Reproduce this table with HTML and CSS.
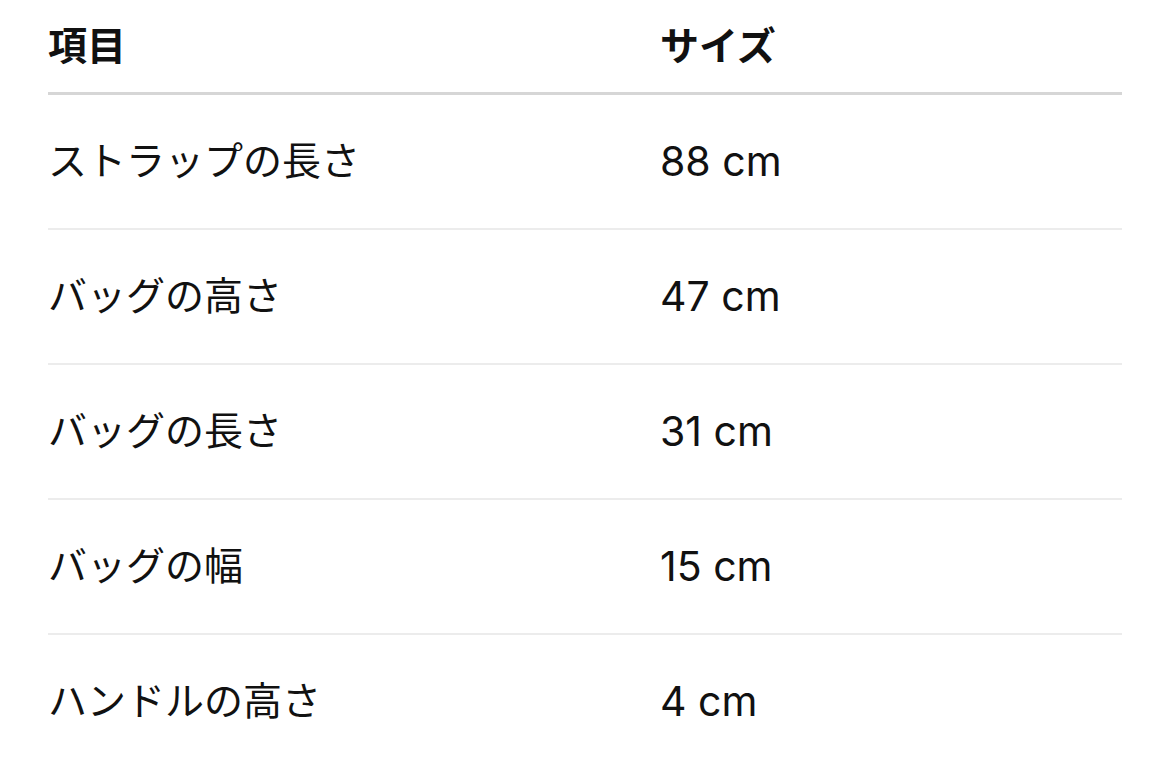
FILE: index.html
```html
<!DOCTYPE html>
<html lang="ja">
<head>
<meta charset="utf-8">
<link rel="stylesheet" href="styles.css">
</head>
<body>
<div class="table">
  <div class="row head">
    <div class="cell">項目</div>
    <div class="cell">サイズ</div>
  </div>
  <div class="row">
    <div class="cell">ストラップの長さ</div>
    <div class="cell value">88 cm</div>
  </div>
  <div class="row">
    <div class="cell">バッグの高さ</div>
    <div class="cell value">47 cm</div>
  </div>
  <div class="row">
    <div class="cell">バッグの長さ</div>
    <div class="cell value">31 cm</div>
  </div>
  <div class="row">
    <div class="cell">バッグの幅</div>
    <div class="cell value">15 cm</div>
  </div>
  <div class="row last">
    <div class="cell">ハンドルの高さ</div>
    <div class="cell value">4 cm</div>
  </div>
</div>
</body>
</html>
```

FILE: styles.css
```css
html, body {
  margin: 0;
  padding: 0;
  background: #ffffff;
}
body {
  font-family: "Inter", "Noto Sans CJK JP", sans-serif;
  color: #111111;
  font-size: 39px;
  overflow: hidden;
}
.table {
  padding: 0 48px;
}
.row {
  display: grid;
  grid-template-columns: 612px 1fr;
  align-items: center;
  height: 133px;
  border-bottom: 2px solid #ececec;
}
.row.head {
  height: 92px;
  border-bottom: 3px solid #d6d6d6;
  font-weight: bold;
}
.row.last {
  border-bottom: none;
}
.cell {
  line-height: 1.2;
}
.value {
  font-size: 41px;
}
```
